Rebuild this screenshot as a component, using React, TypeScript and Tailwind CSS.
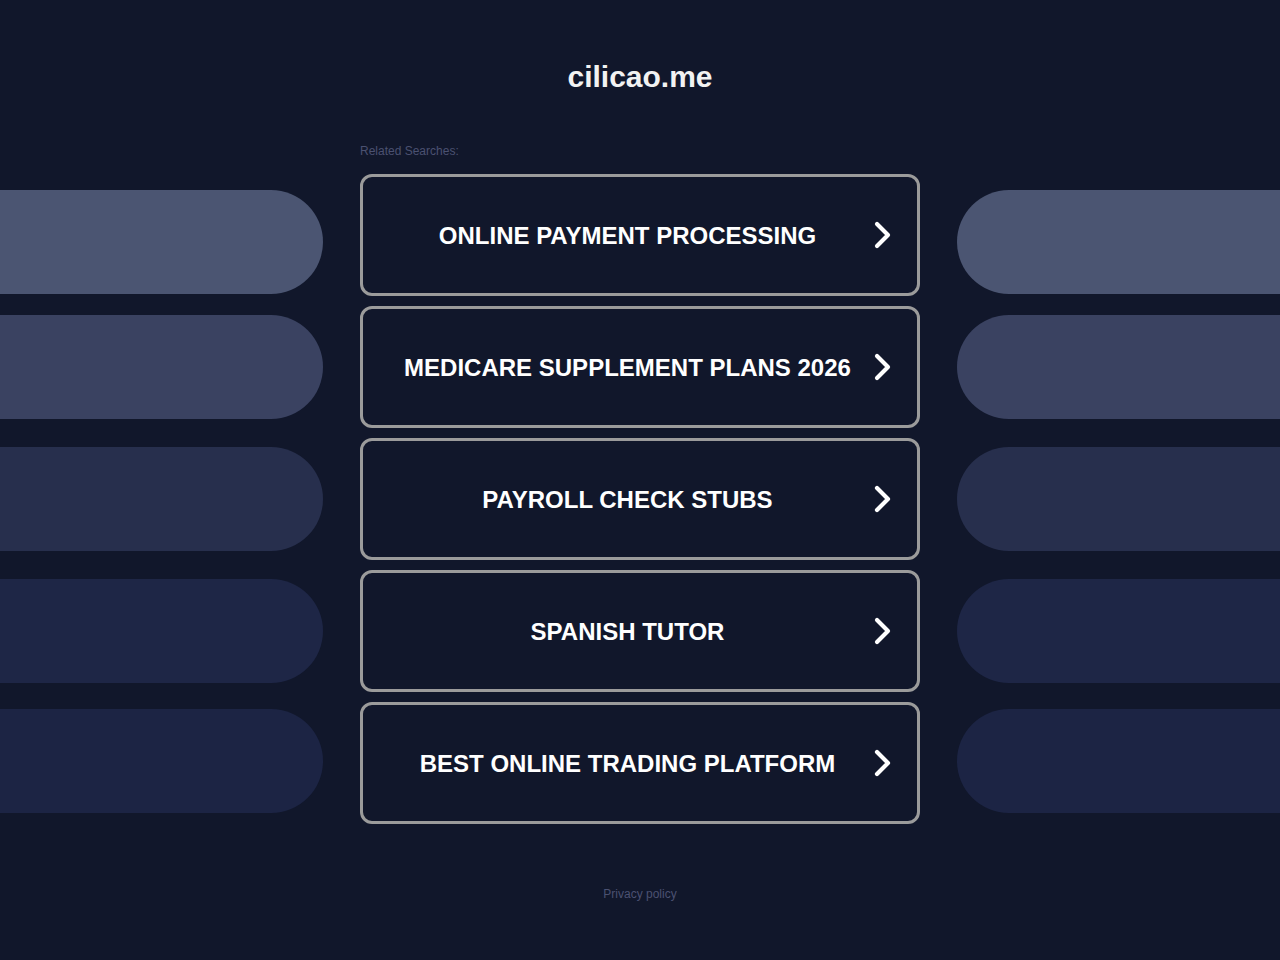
interface Row {
  label: string;
  pill: string;
  pillShift: string;
}

// related search rows, with the colour of the side bands
const rows: Row[] = [
  { label: "ONLINE PAYMENT PROCESSING", pill: "bg-[#4b5572]", pillShift: "mt-[14px]" },
  { label: "MEDICARE SUPPLEMENT PLANS 2026", pill: "bg-[#3a4261]", pillShift: "" },
  { label: "PAYROLL CHECK STUBS", pill: "bg-[#272f4d]", pillShift: "" },
  { label: "SPANISH TUTOR", pill: "bg-[#1e2646]", pillShift: "" },
  { label: "BEST ONLINE TRADING PLATFORM", pill: "bg-[#1c2444]", pillShift: "mt-[-5px]" },
];

function Chevron() {
  return (
    <svg width="20" height="28" viewBox="0 0 20 28" fill="none" className="shrink-0">
      <path
        d="M5 3 L16 14 L5 25"
        stroke="white"
        strokeWidth="4.2"
        strokeLinecap="round"
        strokeLinejoin="round"
      />
    </svg>
  );
}

export default function App() {
  return (
    <div className="min-h-screen w-full bg-[#11172b] font-['Liberation_Sans',Arial,sans-serif] overflow-hidden">
      <div className="pt-[59px] text-center">
        <h1 className="text-[30px] leading-[36px] font-bold text-[#f2f2f2]">cilicao.me</h1>
      </div>

      <div className="mx-auto w-[560px] mt-[48px] mb-[15px]">
        <p className="text-[12px] leading-[16px] text-[#4b5171]">Related Searches:</p>
      </div>

      <div className="flex flex-col gap-[10px]">
        {rows.map((row) => (
          <div
            key={row.label}
            className="grid grid-cols-[323px_560px_323px] gap-x-[37px] items-center"
          >
            <div className={`h-[104px] rounded-r-full ${row.pill} ${row.pillShift}`} />
            <a
              href="#"
              className="flex items-center h-[122px] rounded-[12px] border-[3px] border-[#9b9b9b] bg-[#11172b] pl-[20px] pr-[25px]"
            >
              <span className="flex-1 pt-[2px] text-center text-[24px] leading-[28px] font-bold text-white">
                {row.label}
              </span>
              <Chevron />
            </a>
            <div className={`h-[104px] rounded-l-full ${row.pill} ${row.pillShift}`} />
          </div>
        ))}
      </div>

      <div className="mt-[57px] text-center">
        <a href="#" className="text-[12px] leading-[16px] text-[#4b5171]">
          Privacy policy
        </a>
      </div>
    </div>
  );
}
